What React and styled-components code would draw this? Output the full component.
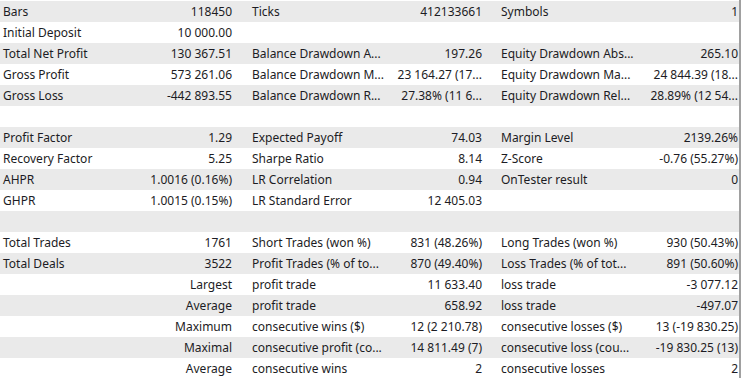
import React from "react";
import styled, { createGlobalStyle } from "styled-components";

const GlobalStyle = createGlobalStyle`
  html, body {
    margin: 0;
    padding: 0;
    background: #ffffff;
  }
  body {
    font-family: "Noto Sans", "Liberation Sans", sans-serif;
    font-size: 12px;
    color: #1c1c24;
  }
`;

const Report = styled.div`
  width: 741px;
  height: 378px;
  padding-top: 1px;
  box-sizing: border-box;
  border-right: 2px solid #a0a0a0;
  overflow: hidden;
`;

const Row = styled.div`
  display: grid;
  grid-template-columns: 140px 108px 142px 107px 142px 102px;
  height: 21px;
  align-items: center;
  background: ${(p) => (p.$shaded ? "#eaeaea" : "#ffffff")};
`;

const Label = styled.div`
  padding-left: ${(p) => (p.$first ? "3px" : "4px")};
  white-space: nowrap;
  overflow: hidden;
`;

const Value = styled.div`
  text-align: right;
  padding-right: ${(p) => p.$pad}px;
  white-space: nowrap;
  overflow: hidden;
`;

const rows = [
  ["Bars", "118450", "Ticks", "412133661", "Symbols", "1"],
  ["Initial Deposit", "10 000.00", "", "", "", ""],
  ["Total Net Profit", "130 367.51", "Balance Drawdown A...", "197.26", "Equity Drawdown Abs...", "265.10"],
  ["Gross Profit", "573 261.06", "Balance Drawdown M...", "23 164.27 (17...", "Equity Drawdown Ma...", "24 844.39 (18..."],
  ["Gross Loss", "-442 893.55", "Balance Drawdown R...", "27.38% (11 6...", "Equity Drawdown Rel...", "28.89% (12 54..."],
  ["", "", "", "", "", ""],
  ["Profit Factor", "1.29", "Expected Payoff", "74.03", "Margin Level", "2139.26%"],
  ["Recovery Factor", "5.25", "Sharpe Ratio", "8.14", "Z-Score", "-0.76 (55.27%)"],
  ["AHPR", "1.0016 (0.16%)", "LR Correlation", "0.94", "OnTester result", "0"],
  ["GHPR", "1.0015 (0.15%)", "LR Standard Error", "12 405.03", "", ""],
  ["", "", "", "", "", ""],
  ["Total Trades", "1761", "Short Trades (won %)", "831 (48.26%)", "Long Trades (won %)", "930 (50.43%)"],
  ["Total Deals", "3522", "Profit Trades (% of to...", "870 (49.40%)", "Loss Trades (% of tot...", "891 (50.60%)"],
  ["", "Largest", "profit trade", "11 633.40", "loss trade", "-3 077.12"],
  ["", "Average", "profit trade", "658.92", "loss trade", "-497.07"],
  ["", "Maximum", "consecutive wins ($)", "12 (2 210.78)", "consecutive losses ($)", "13 (-19 830.25)"],
  ["", "Maximal", "consecutive profit (co...", "14 811.49 (7)", "consecutive loss (cou...", "-19 830.25 (13)"],
  ["", "Average", "consecutive wins", "2", "consecutive losses", "2"],
];

export default function App() {
  return (
    <>
      <GlobalStyle />
      <Report>
        {rows.map((r, i) => (
          <Row key={i} $shaded={i % 2 === 0}>
            <Label $first>{r[0]}</Label>
            <Value $pad={16}>{r[1]}</Value>
            <Label>{r[2]}</Label>
            <Value $pad={15}>{r[3]}</Value>
            <Label>{r[4]}</Label>
            <Value $pad={3}>{r[5]}</Value>
          </Row>
        ))}
      </Report>
    </>
  );
}
